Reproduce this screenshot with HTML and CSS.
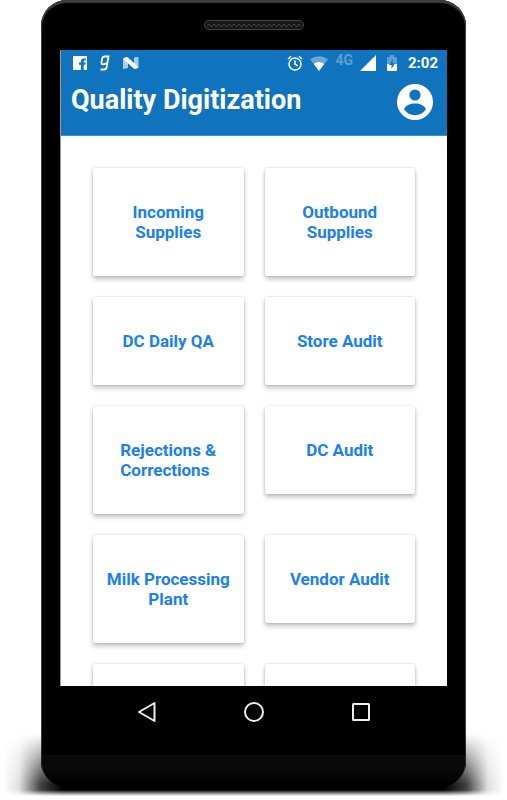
FILE: index.html
```html
<!DOCTYPE html>
<html lang="en">
<head>
  <meta charset="UTF-8" />
  <meta name="viewport" content="width=device-width, initial-scale=1.0"/>
  <title>Quality Digitization</title>
  <link rel="stylesheet" href="styles.css">
</head>
<body>
  <div class="phone">
    <div class="bezel">
      <svg class="speaker" width="100" height="10" viewBox="0 0 100 10">
        <defs>
          <pattern id="mesh" width="5" height="10" patternUnits="userSpaceOnUse">
            <path d="M0 4l2.500 3L5 4" fill="none" stroke="#484848" stroke-width="1"/>
          </pattern>
        </defs>
        <rect x=".5" y=".5" width="99" height="9" rx="4.500" fill="#171717" stroke="#444"/>
        <rect x="3" y="1" width="94" height="8" rx="4" fill="url(#mesh)"/>
      </svg>
    </div>

    <div class="screen">
      <header class="header">
        <div class="status">
          <div class="notifications">
            <svg width="14" height="14" viewBox="0 0 14 14">
              <path fill="#fff" d="M.5 0h13a.5.5 0 0 1 .5.5v13a.5.5 0 0 1-.5.5h-2.800V8.700h1.700l.3-2.100h-2V5.400c0-.6.2-1 1-1h1.100V2.500C11.900 2.400 11.300 2.400 10.700 2.400 9 2.400 7.900 3.400 7.900 5.200v1.400H6v2.100h1.900V14H.5a.5.5 0 0 1-.5-.5V.5a.5.5 0 0 1 .5-.5z"/>
            </svg>
            <svg width="12" height="16" viewBox="0 0 12 16">
              <path fill="none" stroke="#fff" stroke-width="1.800" stroke-linejoin="round" d="M10.300 1.500H5.300Q3.600 1.500 3.200 3.500L2.500 7.200Q2.200 9.300 3.800 9.300 7 9.300 8.300 7.500M9.500 1.500L7.700 12Q7.300 14.500 5 14.500H1.500"/>
            </svg>
            <svg width="16" height="14" viewBox="0 0 16 14">
              <path fill="#fff" fill-opacity=".65" d="M0 2.500L5 6v6L0 13zM11 1.500L15.500 1v10.500L11 8z"/>
              <path fill="#fff" d="M0 3Q2.500 0 5 1.500L15.500 11Q13.500 14 10.800 12.500z"/>
            </svg>
          </div>

          <svg width="16" height="16" viewBox="0 0 16 16">
            <g fill="none" stroke="#fff" stroke-width="1.500">
              <circle cx="8" cy="9" r="6"/>
              <path d="M1 4l3-2.800M15 4l-3-2.800M8 5.500V9.200l2.700 1.700"/>
            </g>
          </svg>
          <svg width="18" height="15" viewBox="0 0 18 15">
            <path fill="#6ba7d7" d="M0 3.300Q9-3 18 3.300L9 15z"/>
            <path fill="#fff" d="M3.800 8Q9 4 14.200 8L9 15z"/>
          </svg>
          <span class="network">4G</span>
          <svg width="16" height="16" viewBox="0 0 16 16">
            <path fill="#fff" d="M16 0v16H0z"/>
          </svg>
          <svg class="battery" width="10" height="16" viewBox="0 0 10 16">
            <path fill="#5d9fd2" d="M3 0h4v2h3v14H0V2h3z"/>
            <path fill="#fff" d="M0 9h10v6a1 1 0 0 1-1 1H1a1 1 0 0 1-1-1z"/>
            <path fill="#0f74bd" d="M6 4L2 10h2.500v4L8 8.200H5.600z"/>
          </svg>
          <span class="clock">2:02</span>
        </div>
        <div class="toolbar">
          <h1>Quality Digitization</h1>
          <button class="account" aria-label="Account">
            <svg width="36" height="36" viewBox="0 0 36 36">
              <circle cx="18" cy="18" r="18" fill="#fff"/>
              <circle cx="18" cy="11" r="5.600" fill="#0f74bd"/>
              <path fill="#0f74bd" d="M7.200 25.500C8 21.500 13.500 19.600 18 19.600s10 1.900 10.800 5.900C26.500 29 22.500 31.200 18 31.200S9.500 29 7.200 25.500z"/>
            </svg>
          </button>
        </div>
      </header>

      <main class="cards">
        <button class="card centered">Incoming<br>Supplies</button>
        <button class="card centered">Outbound<br>Supplies</button>
        <button class="card">DC Daily QA</button>
        <button class="card">Store Audit</button>
        <button class="card"><span>Rejections &amp;<br>Corrections</span></button>
        <button class="card">DC Audit</button>
        <button class="card centered">Milk Processing<br>Plant</button>
        <button class="card">Vendor Audit</button>
        <button class="card" aria-label="More"></button>
        <button class="card" aria-label="More"></button>
      </main>
    </div>

    <nav class="navbar">
      <button aria-label="Back">
        <svg width="22" height="22" viewBox="0 0 22 22">
          <path d="M18.500 2v18L3 11z" fill="none" stroke="#eee" stroke-width="2" stroke-linejoin="round"/>
        </svg>
      </button>
      <button aria-label="Home">
        <svg width="22" height="22" viewBox="0 0 22 22">
          <circle cx="11" cy="11" r="9" fill="none" stroke="#eee" stroke-width="2"/>
        </svg>
      </button>
      <button aria-label="Recent apps">
        <svg width="22" height="22" viewBox="0 0 22 22">
          <rect x="3" y="3" width="16" height="16" rx=".5" fill="none" stroke="#eee" stroke-width="2"/>
        </svg>
      </button>
    </nav>
    <div class="chin"></div>
  </div>
</body>
</html>
```
FILE: styles.css
```css
:root {
  --blue: #0f74bd;
  --link: #1a7ff5;
}

* {
  box-sizing: border-box;
}

body {
  margin: 0;
  height: 100vh;
  padding: 0 41px 13px;
  background: #fff;
  font-family: Roboto, "Liberation Sans", sans-serif;
  overflow: hidden;
}

button {
  border: none;
  padding: 0;
  background: none;
  font-family: inherit;
  cursor: pointer;
}

svg {
  display: block;
  flex: none;
}

.phone {
  position: relative;
  z-index: 0;
  display: flex;
  flex-direction: column;
  height: 100%;
  background: #000;
  border-radius: 26px;
  box-shadow: inset 0 3px 1px #3d3d3d, inset 1px 0 1px #444, inset -1px 0 1px #444;
}

/* ground shadow under the phone */
.phone::before {
  content: "";
  position: absolute;
  z-index: -1;
  left: -38px;
  right: -38px;
  bottom: -9px;
  height: 62px;
  background: linear-gradient(to right, transparent, rgba(0, 0, 0, 0.12) 16px, rgba(0, 0, 0, 0.75) 38px, #000 60px, #000 calc(100% - 60px), rgba(0, 0, 0, 0.75) calc(100% - 38px), rgba(0, 0, 0, 0.12) calc(100% - 16px), transparent);
  -webkit-mask-image: linear-gradient(transparent, #000 50px, #000 56px, transparent);
  mask-image: linear-gradient(transparent, #000 50px, #000 56px, transparent);
}

.bezel {
  display: flex;
  justify-content: center;
  height: 50px;
  padding-top: 20px;
}

.screen {
  flex: 1;
  min-height: 0;
  margin: 0 19px;
  background: #fff;
  border-left: 1px solid #999;
  overflow: hidden;
}

.header {
  height: 86px;
  background: var(--blue);
  border-bottom: 1px solid #3f8fca;
  color: #fff;
}

.status {
  display: flex;
  align-items: center;
  gap: 7px;
  height: 26px;
  padding: 0 9px 0 12px;
}

.notifications {
  display: flex;
  align-items: center;
  gap: 12px;
  margin-right: auto;
}

.network {
  align-self: flex-start;
  font-size: 14px;
  line-height: 20px;
  font-weight: 700;
  color: #5d9fd2;
}

.battery {
  margin-left: 4px;
}

.clock {
  margin-left: 4px;
  font-size: 15px;
  font-weight: 700;
}

.toolbar {
  display: flex;
  align-items: flex-start;
  justify-content: space-between;
  padding: 8px 14px 0 10px;
}

.toolbar h1 {
  margin: 0;
  font-size: 27px;
  line-height: 32px;
  font-weight: 700;
}

.cards {
  display: grid;
  grid-template-columns: 1fr 1fr;
  align-items: start;
  gap: 21px;
  padding: 32px 32px;
}

.card {
  display: flex;
  justify-content: center;
  min-height: 88px;
  padding: 34px 8px;
  background: #fff;
  border-radius: 2px;
  box-shadow: 0 0 2px rgba(0, 0, 0, 0.18), 0 3px 5px rgba(0, 0, 0, 0.25);
  color: var(--link);
  font-size: 17px;
  line-height: 20px;
  font-weight: 700;
  text-align: left;
}

.centered {
  display: block;
  text-align: center;
}

.navbar {
  display: grid;
  grid-template-columns: repeat(3, 1fr);
  justify-items: center;
  align-items: center;
  height: 51px;
  margin: 0 19px;
  padding: 0 33px;
}

.chin {
  height: 50px;
  margin: 0 1px;
  border-radius: 0 0 26px 26px;
  background: linear-gradient(#000 18px, #090909 18px, #090909 32px, #000 48px);
}
```
